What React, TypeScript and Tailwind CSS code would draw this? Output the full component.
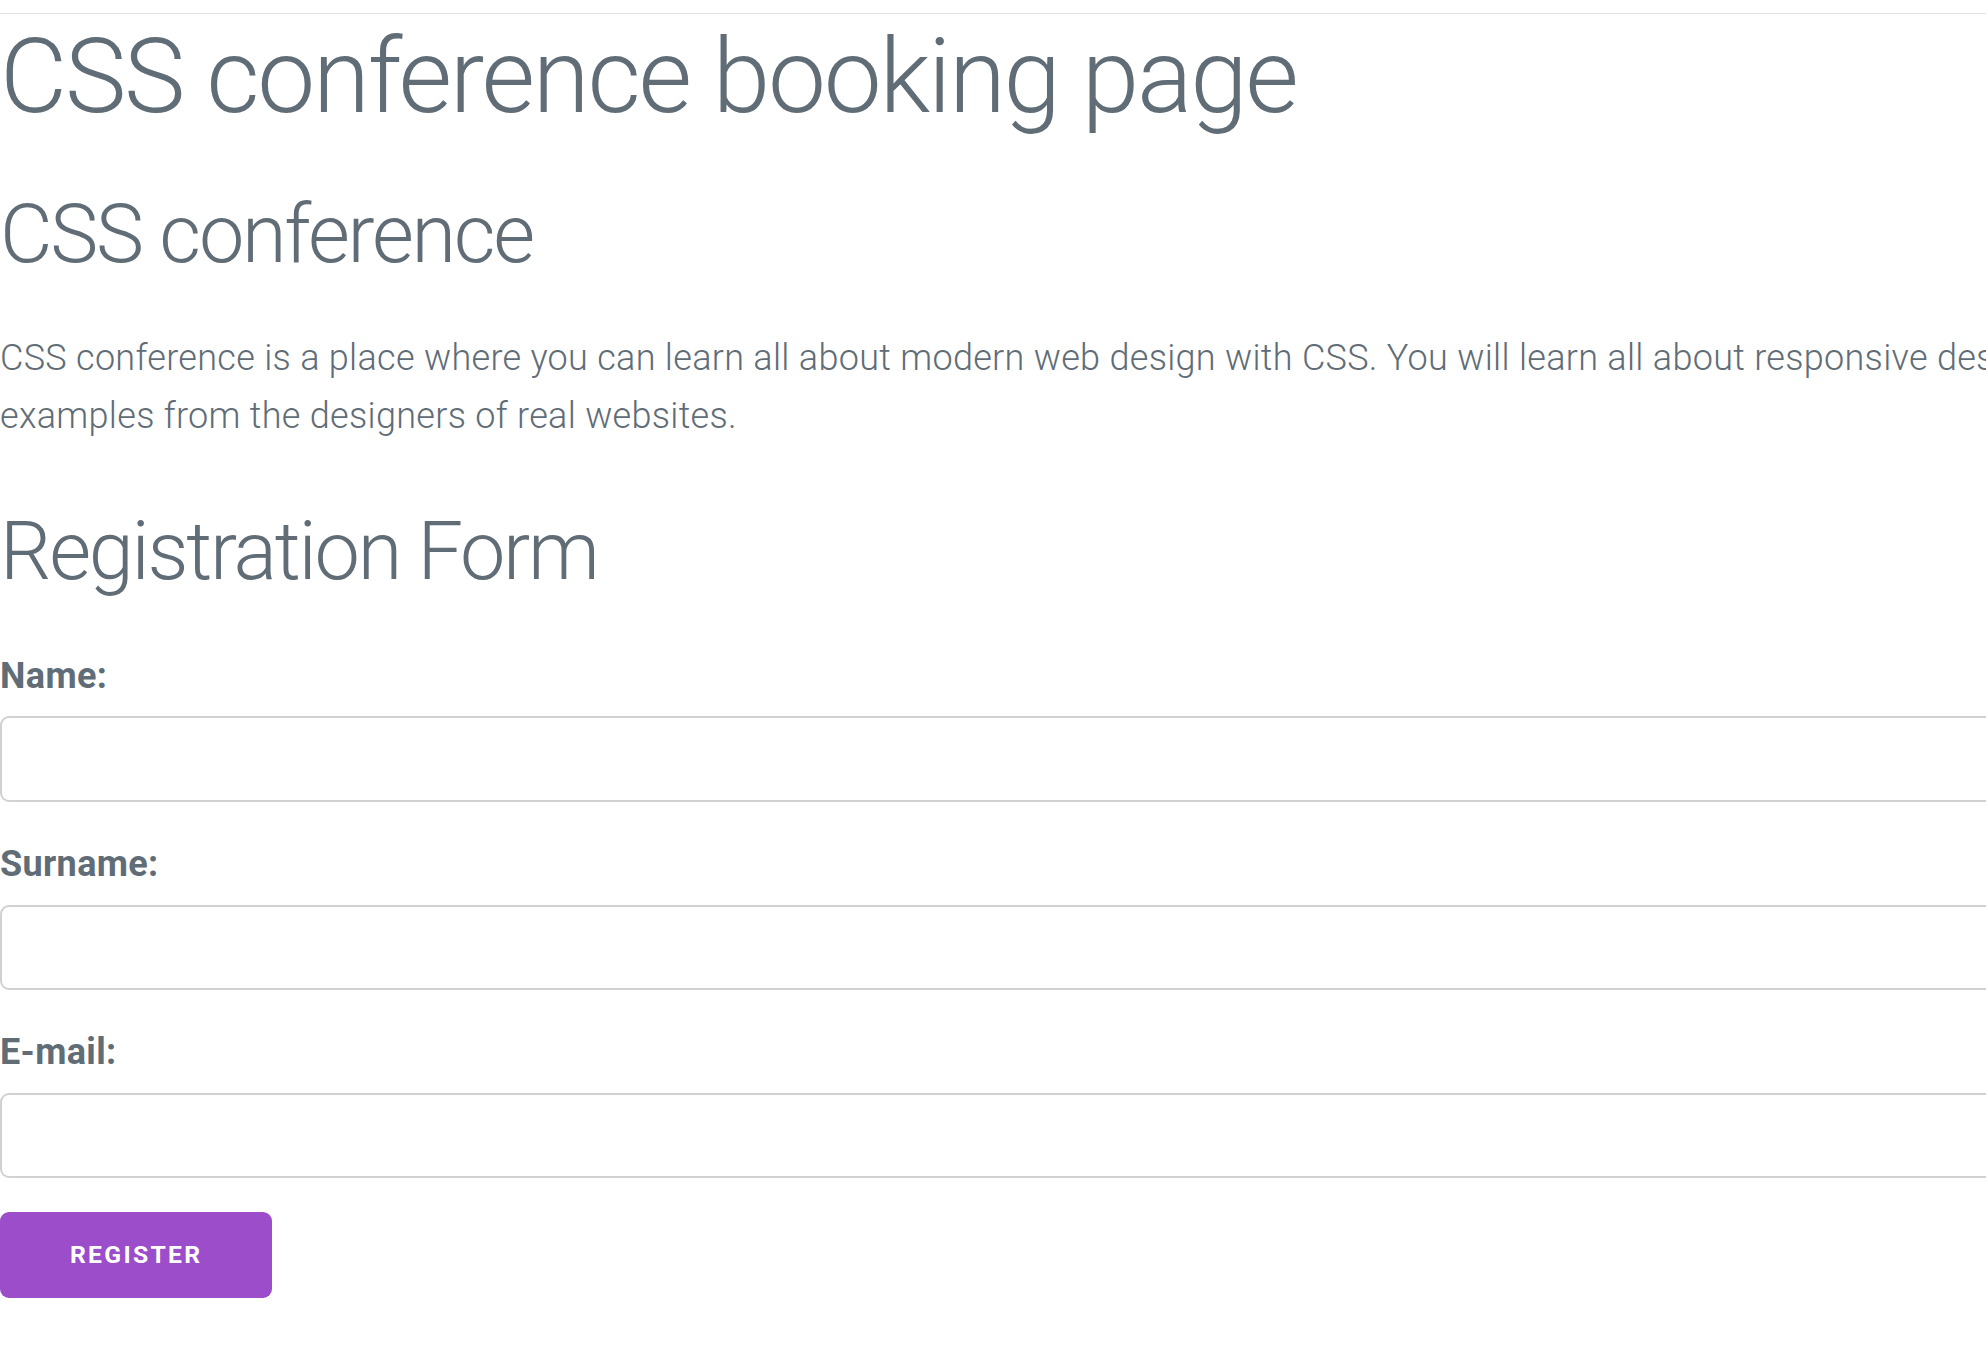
import React from "react";

export default function App() {
  return (
    <div
      className="w-full min-h-screen overflow-hidden bg-white text-[#606c76] tracking-[0.36px]"
      style={{ fontFamily: "Roboto, 'Helvetica Neue', Arial, sans-serif" }}
    >
      <div className="h-[14px] w-full border-b border-[#e1e1e1]" />
      <div className="w-[2400px] pt-[0.5px]">
        <h1 className="text-[103.5px] font-light leading-[1.2] tracking-[-2.25px] mb-[45px]">
          CSS conference booking page
        </h1>
        <h2 className="text-[81px] font-light leading-[1.25] tracking-[-2.25px] mb-[45px]">
          CSS conference
        </h2>
        <p className="text-[36px] font-light leading-[1.6] tracking-[0.3px] mb-[56.25px] whitespace-nowrap">
          CSS conference is a place where you can learn all about modern web design with CSS. You will learn all about responsive design, flexbox, grid and you will see real-life
          <br />
          examples from the designers of real websites.
        </p>
        <h2 className="text-[81px] font-light leading-[1.25] tracking-[-2.25px] mb-[45px]">
          Registration Form
        </h2>
        <form onSubmit={(e) => e.preventDefault()}>
          {[
            { id: "name", label: "Name:", type: "text" },
            { id: "surname", label: "Surname:", type: "text" },
            { id: "email", label: "E-mail:", type: "email" },
          ].map((f) => (
            <div key={f.id}>
              <label
                htmlFor={f.id}
                className="block text-[36px] font-bold leading-[1.6] mb-[11.25px]"
              >
                {f.label}
              </label>
              <input
                id={f.id}
                type={f.type}
                className="block w-full h-[85.5px] mb-[33.75px] rounded-[9px] border-[2px] border-[#d1d1d1] bg-transparent px-[22.5px] text-[36px] outline-none"
              />
            </div>
          ))}
          <button
            type="submit"
            className="h-[86px] px-[70px] rounded-[9px] bg-[#9b4dca] text-white text-[24.75px] font-bold uppercase tracking-[2.25px] leading-[86px]"
          >
            Register
          </button>
        </form>
      </div>
    </div>
  );
}
